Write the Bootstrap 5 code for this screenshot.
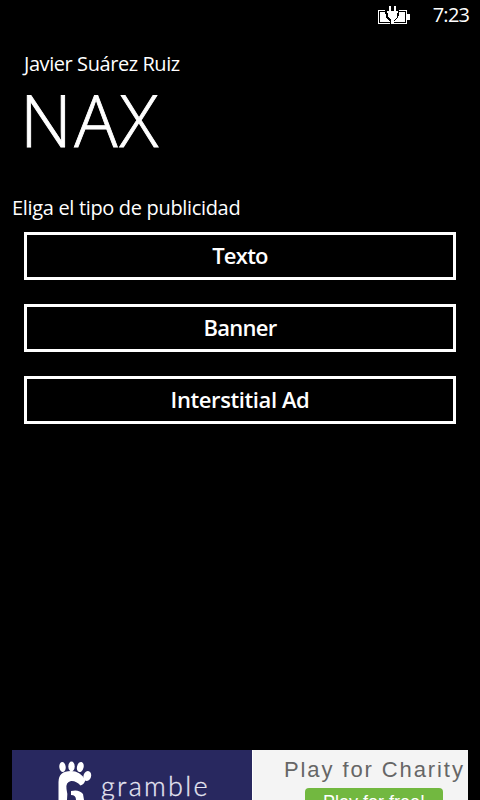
<!DOCTYPE html>
<html lang="es">
<head>
<meta charset="utf-8">
<meta name="viewport" content="width=device-width, initial-scale=1">
<title>NAX</title>
<link href="https://cdn.jsdelivr.net/npm/bootstrap@5.3.0/dist/css/bootstrap.min.css" rel="stylesheet">
<style>
body{background:#000;color:#fff;font-family:"Open Sans","Noto Sans",sans-serif;font-size:20px;line-height:26px}
.screen{width:480px;height:800px}
.status{height:32px;padding:0 11px 0 0;gap:22px}
.clock{line-height:29px;letter-spacing:-.75px;margin-right:-.25px}
.battery{margin-top:5px}
.app-head{padding:19px 24px 0}
.author{letter-spacing:-.43px}
.app-title{font-size:72px;line-height:78px;font-weight:300;letter-spacing:2.2px;margin:3px 0 0 -4px;-webkit-text-stroke:.8px #fff}
.prompt{margin-top:37px;padding-left:12px;letter-spacing:-.33px}
.choices{gap:24px;padding:11px 24px 0}
.choice{--bs-btn-color:#fff;--bs-btn-border-color:#fff;--bs-btn-hover-color:#000;--bs-btn-hover-bg:#fff;--bs-btn-border-width:3px;--bs-btn-border-radius:0;--bs-btn-padding-y:0;height:48px;padding-bottom:2px;font-size:22px;line-height:40px;font-weight:600;letter-spacing:-.75px}
.choice-wide{letter-spacing:-.4px}
.ad{height:50px;margin:0 12px}
.ad-brand{width:240px;background:#28285f;padding-left:45px}
.ad-name{font-family:Lato,sans-serif;font-weight:300;font-size:27px;line-height:32px;color:#e6e6f2;margin:20px 0 0 8px;letter-spacing:2.3px;-webkit-text-stroke:.3px #e6e6f2}
.ad-offer{background:#f4f4f4;border-left:1px solid #fff;font-family:"Liberation Sans",Arial,sans-serif}
.ad-line{margin:12px 0 0 31px;height:20px;color:#666}
.ad-line span{display:block;margin-top:-4px;font-size:22px;line-height:24px;letter-spacing:1.9px}
.ad-cta{width:138px;height:30px;margin:6px 0 0 52px;border-radius:4px;background:#72b840;color:#fff;font-size:18px;line-height:28px}
</style>
</head>
<body>
<main class="screen d-flex flex-column overflow-hidden">
  <div class="status d-flex justify-content-end align-items-start">
    <svg class="battery" width="34" height="20" viewBox="0 0 34 20" shape-rendering="crispEdges" aria-hidden="true">
      <path d="M1.5 5.5h28v13h-28z" fill="none" stroke="#fff"/>
      <path d="M3 7h25v10H3zM30 9h3v6h-3z" fill="#fff"/>
      <path d="M8 4h14v5l-1 4-4 3v4h-4v-4l-4-3z" fill="#000"/>
      <path d="M12 1h2v5h3V1h2v5h2v2h-1v4l-3 3v4h-3v-4l-3-3V8h-1V6h2z" fill="#fff"/>
    </svg>
    <span class="clock">7:23</span>
  </div>
  <header class="app-head">
    <div class="author">Javier Suárez Ruiz</div>
    <h1 class="app-title">NAX</h1>
  </header>
  <div class="prompt">Eliga el tipo de publicidad</div>
  <div class="choices d-grid">
    <button class="btn choice" type="button">Texto</button>
    <button class="btn choice" type="button">Banner</button>
    <button class="btn choice choice-wide" type="button">Interstitial Ad</button>
  </div>
  <div class="ad d-flex mt-auto overflow-hidden">
    <div class="ad-brand d-flex align-items-start flex-shrink-0">
      <svg class="flex-shrink-0" width="36" height="50" viewBox="57 750 36 50" fill="#fff" aria-hidden="true">
        <ellipse cx="62.5" cy="767" rx="3.2" ry="5" transform="rotate(-6 62.5 767)"/>
        <ellipse cx="71.5" cy="766.5" rx="3.2" ry="5"/>
        <ellipse cx="80.3" cy="767" rx="3.3" ry="5.2" transform="rotate(14 80.3 767)"/>
        <ellipse cx="87.3" cy="776" rx="3.8" ry="5" transform="rotate(18 87.3 776)"/>
        <path d="M58.500 800V782Q58.500 771 71 771Q80 771 85.500 780Q84 784.500 80.500 785.500Q76 780.500 71 781Q65.500 782 66.500 789Q68 794 67 800zM71 791Q79 789 83 794L84 800H76Q76 795 71 795z"/>
      </svg>
      <span class="ad-name">gramble</span>
    </div>
    <div class="ad-offer flex-grow-1 overflow-hidden">
      <div class="ad-line overflow-hidden text-nowrap"><span>Play for Charity</span></div>
      <div class="ad-cta text-center">Play for free!</div>
    </div>
  </div>
</main>
<script src="https://cdn.jsdelivr.net/npm/bootstrap@5.3.0/dist/js/bootstrap.bundle.min.js"></script>
</body>
</html>
